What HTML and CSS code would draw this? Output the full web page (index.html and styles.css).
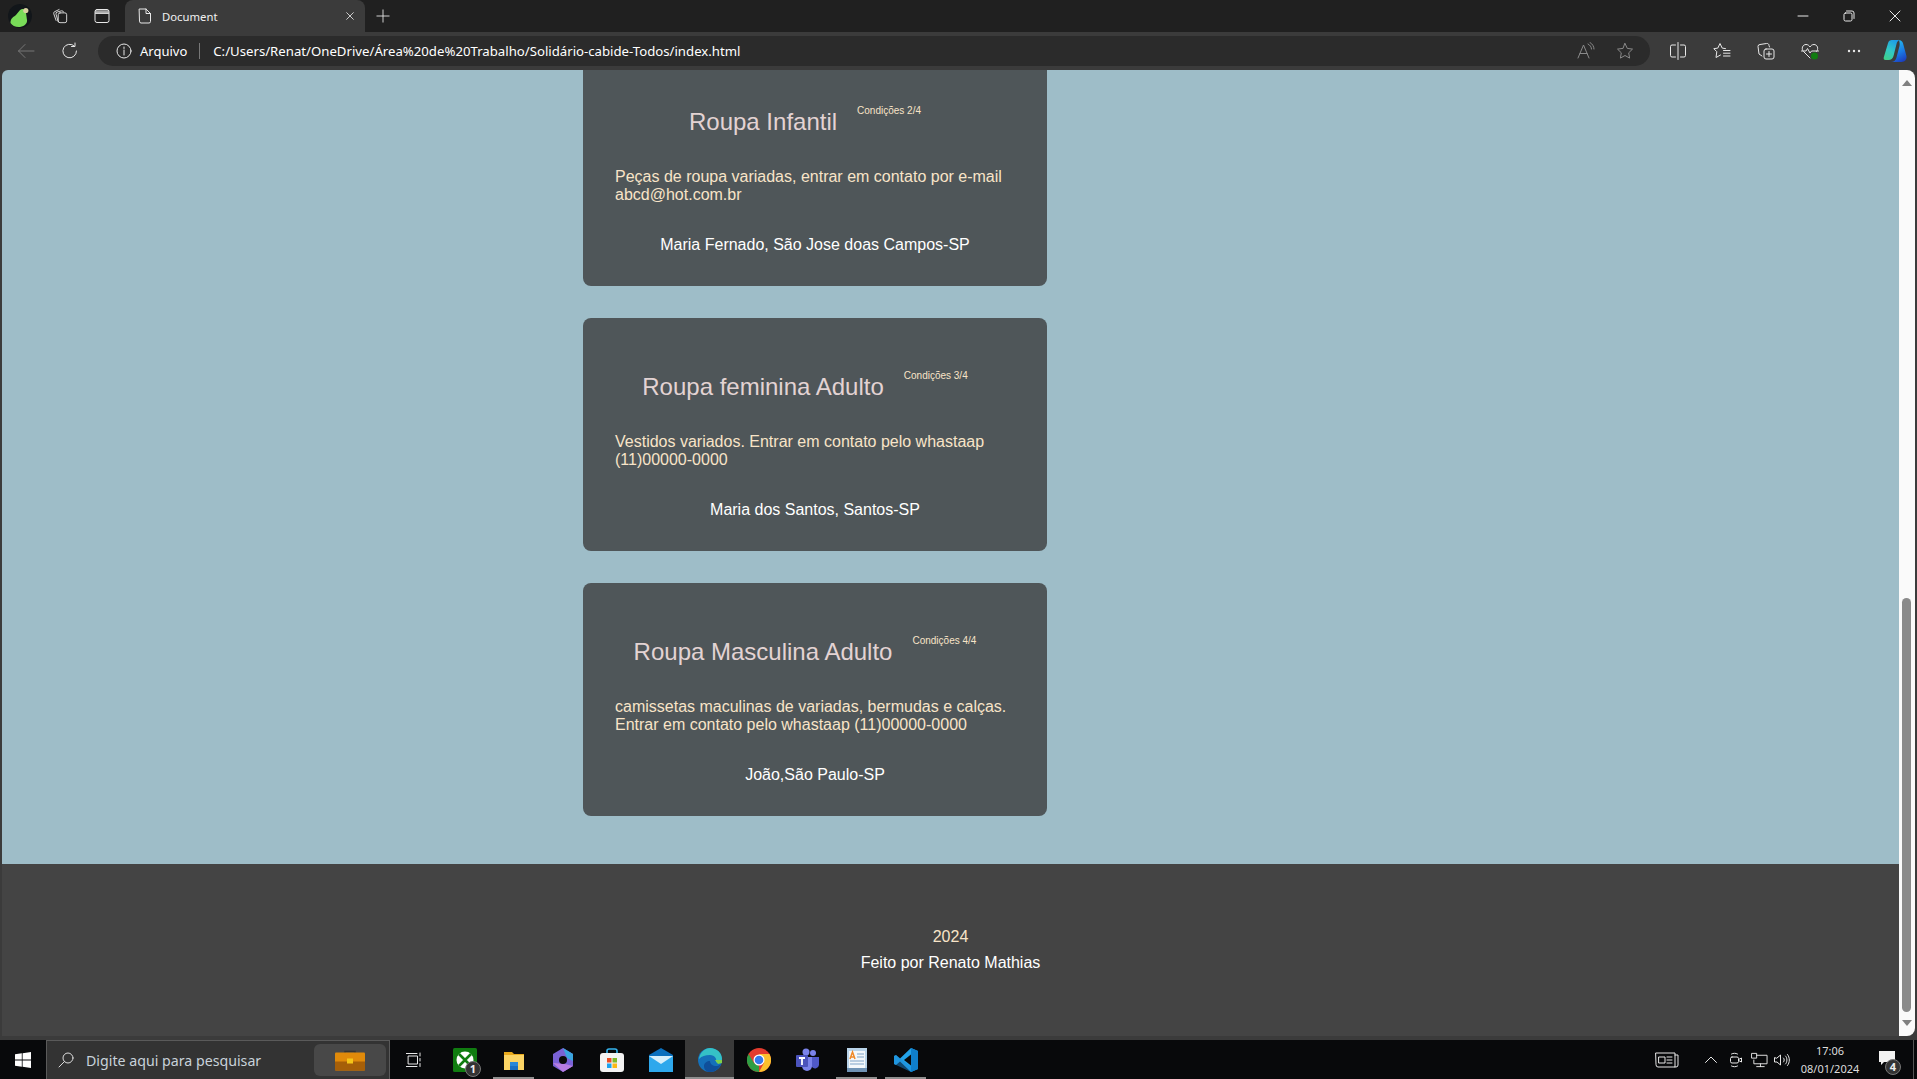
FILE: index.html
```html
<!DOCTYPE html>
<html lang="pt-BR">
<head>
<meta charset="utf-8">
<title>Document</title>
<link rel="stylesheet" href="styles.css">
</head>
<body>
<div class="tabstrip">
  <svg class="avatar" viewBox="0 0 24 24"><circle cx="12" cy="12" r="12" fill="#12161a"/><path d="M2.500 19c0-5 3-6 5.500-8 2-2 3-5 6-6 3-.5 4.500 2 4 4l1 7c.5 3-2 6-7 7-4 .5-8-1.500-9.500-4z" fill="#79dc58"/><circle cx="17.800" cy="6.500" r="2.600" fill="#d8d0a0"/></svg>
  <button class="strip-btn"><svg class="ico" viewBox="0 0 18 18"><rect x="7" y="5.500" width="9.500" height="11" rx="2"/><path d="M7 15.500 4.500 7A2 2 0 0 1 6 4.500L10.500 3.200A2 2 0 0 1 13 4.500M4.600 14 2 6.500A2 2 0 0 1 3.300 4L8 1.700"/></svg></button>
  <button class="strip-btn"><svg class="ico" viewBox="0 0 16 16"><rect x="1" y="1.500" width="14" height="13" rx="2"/><path d="M1.500 3h13M1.500 4.200h13M1.500 5.400h13"/></svg></button>
  <div class="tab">
    <svg class="ico doc" viewBox="0 0 14 16"><path d="M1.500 1h6.500l4.500 4.500v8a1.500 1.500 0 0 1-1.500 1.500H3a1.500 1.500 0 0 1-1.500-1.500zM8 1v4.500h4.500"/></svg>
    <span class="tab-title">Document</span>
    <svg class="ico tab-x" viewBox="0 0 12 12"><path d="M2 2l8 8M10 2l-8 8"/></svg>
  </div>
  <svg class="ico plus" viewBox="0 0 16 16"><path d="M8 1v14M1 8h14"/></svg>
  <div class="win-controls">
    <svg class="ico win" viewBox="0 0 12 12"><path d="M1 6h10"/></svg>
    <svg class="ico win" viewBox="0 0 12 12"><rect x="1" y="3" width="8" height="8" rx="1.500"/><path d="M3.500 1h5.500a2 2 0 0 1 2 2v5.500"/></svg>
    <svg class="ico win" viewBox="0 0 12 12"><path d="M1 1l10 10M11 1L1 11"/></svg>
  </div>
</div>
<div class="toolbar">
  <svg class="ico nav dim" viewBox="0 0 18 18"><path d="M17 9H1.500M8 2.500 1.500 9 8 15.500"/></svg>
  <svg class="ico nav" viewBox="0 0 18 18"><path d="M15.500 9a6.800 6.800 0 1 1-2.200-5M14 1v3.500h-3.500"/></svg>
  <div class="address">
    <svg class="ico info" viewBox="0 0 16 16"><circle cx="8" cy="8" r="7"/><path d="M8 7v5M8 4v1.500"/></svg>
    <span class="scheme">Arquivo</span>
    <span class="sep"></span>
    <span class="url">C:/Users/Renat/OneDrive/Área%20de%20Trabalho/Solidário-cabide-Todos/index.html</span>
    <svg class="ico addr-ico read" viewBox="0 0 18 18"><path d="M1 16 6.500 3l5.500 13M3 11.500h7M11 2c2 1 3.500 3 3.500 5M13 .5c2.500 1.500 4 4 4 6.500"/></svg>
    <svg class="ico addr-ico star" viewBox="0 0 18 18"><path d="M9 1.500l2.300 4.900 5.200.7-3.800 3.700.9 5.300L9 13.500l-4.600 2.600.9-5.300L1.500 7.100l5.200-.7z"/></svg>
  </div>
  <svg class="ico tool split" viewBox="0 0 18 18"><path d="M9 .5v17M6.500 3H3a1.500 1.500 0 0 0-1.500 1.500v9A1.500 1.500 0 0 0 3 15h3.500M11.500 3H15a1.500 1.500 0 0 1 1.500 1.500v9A1.500 1.500 0 0 1 15 15h-3.500"/></svg>
  <svg class="ico tool" viewBox="0 0 18 18"><path d="M12.500 6.600 9.200 6.100 7 1.500 4.800 6.100.8 6.700l3 3-.8 5.800 4.500-2.500M10.500 8.500H17M10.500 11.200H17M10.500 14H17"/></svg>
  <svg class="ico tool" viewBox="0 0 18 18"><rect x="7" y="7" width="10" height="10" rx="2"/><path d="M12 9.500v5M9.500 12h5M5 14 2 12 1 4.500A2 2 0 0 1 3 2.500L9.500 1.500A2 2 0 0 1 12 3.500L12.500 5"/></svg>
  <svg class="ico tool" viewBox="0 0 18 18"><path d="M9 16 2.500 9.500C0 7 1.500 2.500 5 2.500 7 2.500 8 3.500 9 5c1-1.500 2-2.500 4-2.500 3.500 0 5 4.500 2.500 7M.5 9H5l1.500-2.500L9 11l1.500-2h7"/><circle class="green-dot" cx="13.500" cy="14" r="3.500"/></svg>
  <svg class="tool dots" viewBox="0 0 14 4"><circle cx="2" cy="2" r="1.200"/><circle cx="7" cy="2" r="1.200"/><circle cx="12" cy="2" r="1.200"/></svg>
  <svg class="copilot" viewBox="0 0 24 24">
    <defs>
      <linearGradient id="cpA" x1="0.700" y1="0" x2="0.200" y2="1"><stop offset="0" stop-color="#1d9be8"/><stop offset="0.550" stop-color="#32c9c4"/><stop offset="1" stop-color="#3fd08a"/></linearGradient>
      <linearGradient id="cpB" x1="0.300" y1="0" x2="0.700" y2="1"><stop offset="0" stop-color="#28c4ee"/><stop offset="0.600" stop-color="#1a78e4"/><stop offset="1" stop-color="#1c3fc0"/></linearGradient>
    </defs>
    <path d="M9 1h7.500c-1.500.5-2.500 2-3 4l-3 12c-.7 2.500-2.500 4-5 4H2.500C1 21 .3 19.800.8 18.300L5 4.200C5.600 2.200 7 1 9 1z" fill="url(#cpA)"/>
    <path d="M15.500 1c2.500 0 4 1.300 4.500 3.300l3.500 13c.4 3-1.500 5.700-5 5.700H8c2.700 0 4.700-1.500 5.500-4.500l3-11.500c.5-2.500 0-5-1-6.500z" fill="url(#cpB)"/>
  </svg>
</div>
<div class="viewport">
  <main class="page">
    <section class="cards">
      <article class="card">
        <header class="card-head"><h2 class="card-title">Roupa Infantil</h2><small class="card-cond">Condições 2/4</small></header>
        <p class="card-desc">Peças de roupa variadas, entrar em contato por e-mail abcd@hot.com.br</p>
        <p class="card-author">Maria Fernado, São Jose doas Campos-SP</p>
      </article>
      <article class="card">
        <header class="card-head"><h2 class="card-title">Roupa feminina Adulto</h2><small class="card-cond">Condições 3/4</small></header>
        <p class="card-desc">Vestidos variados. Entrar em contato pelo whastaap (11)00000-0000</p>
        <p class="card-author">Maria dos Santos, Santos-SP</p>
      </article>
      <article class="card">
        <header class="card-head"><h2 class="card-title">Roupa Masculina Adulto</h2><small class="card-cond">Condições 4/4</small></header>
        <p class="card-desc">camissetas maculinas de variadas, bermudas e calças. Entrar em contato pelo whastaap (11)00000-0000</p>
        <p class="card-author">João,São Paulo-SP</p>
      </article>
    </section>
    <footer class="site-footer">
      <p class="foot-year">2024</p>
      <p class="foot-by">Feito por Renato Mathias</p>
    </footer>
  </main>
  <aside class="scrollbar">
    <svg class="arrow" viewBox="0 0 10 6"><path d="M5 0l5 6H0z"/></svg>
    <div class="track"><div class="thumb"></div></div>
    <svg class="arrow" viewBox="0 0 10 6"><path d="M5 6l5-6H0z"/></svg>
  </aside>
</div>
<div class="taskbar">
  <button class="start"><svg class="task-svg" viewBox="0 0 16 16"><path class="white" d="M0 2.300 6.800 1.300v6.300H0zM7.600 1.200 16 0v7.600H7.600zM0 8.400h6.800v6.300L0 13.700zM7.600 8.400H16V16l-8.400-1.200z"/></svg></button>
  <div class="search">
    <svg class="ico search-ico" viewBox="0 0 16 16"><circle cx="10" cy="6" r="5"/><path d="M6.500 9.500 1 15"/></svg>
    <span class="search-text">Digite aqui para pesquisar</span>
    <div class="widget"><svg class="case" viewBox="0 0 30 20"><path d="M10 3V1h10v2" fill="none" stroke="#333" stroke-width="1.500"/><rect y="2" width="30" height="18" rx="1" fill="#e08a0a"/><rect y="11" width="30" height="9" fill="#a65f08"/><rect x="12" y="8" width="6" height="5" fill="#f5c518"/></svg></div>
  </div>
  <button class="task-btn view"><svg class="ico task-svg" viewBox="0 0 16 16"><rect x="2.500" y="4" width="9" height="8"/><path d="M0 1.500h11M0 14.500h11M14 1v3M14 6.500v2.500M14 11.500v3"/></svg></button>
  <button class="task-btn"><svg class="task-svg big" viewBox="0 0 24 24"><rect width="24" height="24" rx="1.500" fill="#107c10"/><circle cx="12" cy="12" r="8.500" fill="#fff"/><path d="M6 6l12 12M18 6 6 18" stroke="#107c10" stroke-width="2.600"/></svg><span class="badge badge-x">1</span></button>
  <button class="task-btn on"><svg class="task-svg big" viewBox="0 0 24 24"><path d="M2 4h8l2 2h10v16H2z" fill="#e8a91c"/><path d="M2 7h20v15H2z" fill="#fbd465"/><path d="M8 18v-4h8v4" fill="#2a88d8"/><path d="M8 22v-4h8v4" fill="#1b6fc2"/></svg></button>
  <button class="task-btn"><svg class="task-svg big" viewBox="0 0 24 24"><path d="M12 0 22 6v12l-10 6-10-6V6z" fill="#7a62d6"/><path d="M12 0l10 6v7l-6-3z" fill="#3aa5e0"/><path d="M2 15l10 9 10-6-8-2z" fill="#b77ce0"/><circle cx="12" cy="12" r="4" fill="#0a0a0a"/></svg></button>
  <button class="task-btn"><svg class="task-svg big" viewBox="0 0 24 24"><path d="M7 6V3a2 2 0 0 1 2-2h6a2 2 0 0 1 2 2v3" fill="none" stroke="#35b4ee" stroke-width="1.600"/><rect y="5" width="24" height="19" rx="3" fill="#f3f3f3"/><rect x="7" y="10" width="4.500" height="4.500" fill="#ea4e25"/><rect x="12.500" y="10" width="4.500" height="4.500" fill="#7eba28"/><rect x="7" y="15.500" width="4.500" height="4.500" fill="#1aa3f0"/><rect x="12.500" y="15.500" width="4.500" height="4.500" fill="#fcb813"/></svg></button>
  <button class="task-btn"><svg class="task-svg big" viewBox="0 0 24 24"><path d="M0 7 12 0l12 7v15H0z" fill="#0a6fbd"/><path d="M0 8h24v16H0z" fill="#2ea8ec"/><path d="M0 8l12 8 12-8z" fill="#d6effb"/></svg></button>
  <button class="task-btn on active"><svg class="task-svg big" viewBox="0 0 24 24"><circle cx="12" cy="12" r="12" fill="#1570b9"/><path d="M1 11C2 4 7 0 12 0c7 0 12 5 12 11 0 4-4 5-6 3 1-3-1-7-6-7-5 0-8 1-11 4z" fill="#35c1c6"/><path d="M24 13c-1 6-6 11-12 11-3 0-6-2-6-6 0-3 3-5 6-5 0 3 3 5 6 5 3 0 6-2 6-5z" fill="#0f4f9a"/><path d="M17 12h7v3l-4 1z" fill="#7fd14b"/></svg></button>
  <button class="task-btn"><svg class="task-svg big" viewBox="0 0 24 24"><circle cx="12" cy="12" r="12" fill="#e33b2e"/><path d="M12 24A12 12 0 0 1 1.600 6L7 15l5 3z" fill="#2f9e44"/><path d="M12 6h10.400A12 12 0 0 1 12 24l5-9z" fill="#fbc02d"/><circle cx="12" cy="12" r="5.500" fill="#fff"/><circle cx="12" cy="12" r="4.300" fill="#3579ea"/></svg></button>
  <button class="task-btn"><svg class="task-svg big" viewBox="0 0 24 24"><circle cx="17" cy="5" r="3" fill="#7b83eb"/><circle cx="10" cy="4" r="3.500" fill="#7b83eb"/><path d="M13 9h10v8a4 4 0 0 1-7 2l-3-2z" fill="#5059c9"/><path d="M6 9h10v9a5 5 0 0 1-10 0z" fill="#7b83eb"/><rect y="7" width="12" height="12" rx="1" fill="#4b53bc"/><path d="M3 10h6M6 10v7" stroke="#fff" stroke-width="1.800"/></svg></button>
  <button class="task-btn on"><svg class="task-svg big" viewBox="0 0 24 24"><path d="M2 0h20v22H2z" fill="#b9d4ea"/><rect x="4" y="3" width="16" height="17" fill="#f4f8fb"/><path d="M12 6h7M12 9h7M5 13h14M5 16h14" stroke="#7fa3c7"/><path d="M5 11 7.500 4 10 11M6 9h3" stroke="#f08a2a" fill="none" stroke-width="1.500"/><rect x="2" y="20" width="20" height="4" fill="#6f93b5"/></svg></button>
  <button class="task-btn on"><svg class="task-svg big" viewBox="0 0 24 24"><path d="M17 0 24 3v18l-7 3L6 13.500 2 17l-2-1V8l2-1 4 3.500z" fill="#23a3ea"/><path d="M17 6.500 10 12l7 5.500z" fill="#0a0a0a"/><path d="M17 0 24 3v18l-7 3z" fill="#0f7fcc"/><path d="M0 8l2-1 15 12v5L0 16z" fill="#1c8ad6" opacity=".5"/></svg></button>
  <div class="tray">
    <svg class="ico tray-news" viewBox="0 0 24 16"><path d="M1 1h19v14H3a2 2 0 0 1-2-2zM20 3h3v10a2 2 0 0 1-2 2h-1M4 5h6v6H4zM12 5h5M12 8h5M12 11h5"/></svg>
    <svg class="ico tray-chev" viewBox="0 0 12 7"><path d="M.5 6.500 6 1l5.500 5.500"/></svg>
    <svg class="ico tray-ico tray-meet" viewBox="0 0 16 16"><rect x="2" y="5" width="8" height="6" rx="1.500"/><path d="M10 7.500l3-1.500v4l-3-1.500M3 2c2-1 4-1 6 0M3 14c2 1 4 1 6 0"/></svg>
    <svg class="ico tray-ico" viewBox="0 0 18 16"><path d="M6 3h11v9H3V8M10 12v3M6 15h8M1 1h5v5H1z"/></svg>
    <svg class="ico tray-ico" viewBox="0 0 16 16"><path d="M1 6v4h2.500L7 13V3L3.500 6zM10 6c1 1 1 3 0 4M12 4c2 2 2 6 0 8M14 2.500c2.500 3 2.500 8 0 11"/></svg>
    <div class="clock"><span>17:06</span><span>08/01/2024</span></div>
    <div class="notify"><svg class="notify-ico" viewBox="0 0 16 14"><path d="M0 0h16v11H5l-3 3v-3H0z"/></svg><span class="badge badge-n">4</span></div>
    <span class="show-desktop"></span>
  </div>
</div>
</body>
</html>
```

FILE: styles.css
```css
* { box-sizing: border-box; }
html, body { height: 100%; }
body {
  margin: 0;
  height: 100vh;
  display: flex;
  flex-direction: column;
  overflow: hidden;
  background: #3b3b3b;
  font-family: "Noto Sans", "Open Sans", sans-serif;
  color: #fff;
}
button { background: none; border: 0; padding: 0; color: inherit; }
.ico { fill: none; stroke: #e8e8e8; stroke-width: 1; stroke-linecap: round; stroke-linejoin: round; flex: none; }

/* tab strip */
.tabstrip { height: 32px; flex: none; display: flex; align-items: center; background: #202020; padding-left: 8px; }
.avatar { width: 24px; height: 24px; flex: none; }
.strip-btn { width: 42px; height: 32px; display: flex; align-items: center; justify-content: center; }
.avatar + .strip-btn { margin-left: 7px; }
.strip-btn .ico { width: 16px; height: 16px; }
.tab { width: 240px; height: 32px; margin-left: 2px; background: #3b3b3b; border-radius: 8px 8px 0 0; display: flex; align-items: center; padding: 0 10px 0 13px; }
.doc { width: 14px; height: 16px; }
.tab-title { font-size: 11.3px; margin-left: 10px; flex: 1; color: #f0f0f0; }
.tab-x { width: 10px; height: 10px; }
.plus { width: 14px; height: 14px; margin-left: 11px; }
.win-controls { margin-left: auto; display: flex; gap: 34px; padding-right: 16px; }
.win { width: 12px; height: 12px; }

/* toolbar */
.toolbar { height: 38px; flex: none; display: flex; align-items: center; background: #3b3b3b; padding-left: 17px; }
.nav { width: 18px; height: 18px; margin-right: 26px; }
.dim { stroke: #777; }
.address { width: 1552px; height: 30px; margin-left: -7px; background: #2b2b2b; border-radius: 15px; display: flex; align-items: center; padding-left: 18px; }
.info { width: 16px; height: 16px; }
.scheme { font-size: 13px; margin-left: 8px; }
.sep { width: 1px; height: 16px; background: #777; margin: 0 13px 0 12px; }
.url { font-size: 13.2px; flex: 1; white-space: nowrap; }
.addr-ico { width: 18px; height: 18px; stroke: #8a8a8a; margin-right: 21px; }
.star { margin-right: 16px; }
.tool { width: 18px; height: 18px; margin-left: 26px; }
.split { margin-left: 19px; }
.green-dot { fill: #107c10; stroke: none; }
.dots { width: 14px; height: 4px; fill: #e8e8e8; margin-left: 28px; }
.copilot { width: 24px; height: 24px; margin-left: 22px; flex: none; }

/* page */
.viewport { flex: 1; min-height: 0; display: flex; padding: 0 2px 4px; }
.page { flex: 1; min-width: 0; display: flex; flex-direction: column; justify-content: flex-end; overflow: hidden; background: #9ebdc8; border-radius: 6px 0 0 0; font-family: "Liberation Sans", Arial, sans-serif; }
.cards { flex: none; width: 464px; margin: 0 0 48px 581px; display: flex; flex-direction: column; gap: 32px; }
.card { flex: none; height: 233px; padding: 32px; background: #4f5659; border-radius: 8px; }
.card-head { display: flex; justify-content: center; align-items: flex-start; }
.card-title { margin: 23px 0 0; font-size: 24px; font-weight: 400; color: #e3d3d3; }
.card-cond { margin: 20px 20px 0; font-size: 10px; color: #f8e4c8; }
.card-desc { margin: 32px 0 0; font-size: 16px; color: #f8e4c8; }
.card-author { margin: 32px 0 0; font-size: 16px; color: #fff; text-align: center; }
.site-footer { flex: none; height: 172px; background: #444; text-align: center; padding-top: 64px; font-size: 16px; }
.foot-year { margin: 0 0 8px; color: #f8e4c8; }
.foot-by { margin: 0; color: #fff; }

/* scrollbar */
.scrollbar { width: 16px; flex: none; background: #fafafa; border-radius: 0 8px 8px 0; display: flex; flex-direction: column; align-items: center; padding: 10px 0; }
.arrow { width: 10px; height: 6px; fill: #808080; flex: none; }
.track { flex: 1; width: 100%; display: flex; flex-direction: column; justify-content: flex-end; padding: 0 4px 8px 3px; }
.thumb { height: 414px; background: #8a8a8a; border-radius: 5px; }

/* taskbar */
.taskbar { height: 39px; flex: none; display: flex; align-items: stretch; background: #08090b; }
.start { width: 46px; display: flex; align-items: center; justify-content: center; }
.task-svg { width: 16px; height: 16px; }
.white { fill: #fff; }
.big { width: 24px; height: 24px; }
.search { width: 344px; display: flex; align-items: center; background: #333; border: 1px solid #5a5a5a; border-bottom: 0; padding-left: 11px; }
.search-ico { width: 16px; height: 16px; stroke: #ddd; }
.search-text { font-size: 14.2px; color: #c8d2da; margin-left: 12px; flex: 1; }
.widget { width: 72px; height: 32px; background: #484848; border-radius: 6px; margin-right: 3px; display: flex; align-items: center; justify-content: center; }
.case { width: 30px; height: 21px; }
.task-btn { width: 49px; flex: none; display: flex; align-items: center; justify-content: center; position: relative; }
.view { width: 48px; margin-right: 2px; }
.on::after { content: ""; position: absolute; left: 4px; right: 4px; bottom: 0; height: 2px; background: #8f8f8f; }
.active { background: #3a3a3a; }
.active::after { left: 0; right: 0; }
.badge { position: absolute; width: 16px; height: 16px; border-radius: 50%; background: #333; border: 1px solid #777; font: 700 11px/14px "Noto Sans", sans-serif; color: #eee; text-align: center; }
.badge-x { left: 25px; top: 21px; }
.tray { margin-left: auto; display: flex; align-items: center; }
.tray-news { width: 24px; height: 16px; margin-right: 26px; }
.tray-chev { width: 12px; height: 7px; margin-right: 11px; }
.tray-ico { width: 17px; height: 16px; margin-right: 5px; }
.tray-meet { margin-right: 6px; }
.clock { width: 66px; margin: 0 10px 0 2px; display: flex; flex-direction: column; align-items: center; font-size: 11px; line-height: 18px; color: #ddd; }
.notify { width: 30px; height: 39px; position: relative; display: flex; align-items: center; justify-content: center; margin-right: 10px; }
.notify-ico { width: 16px; height: 14px; fill: #f2f2f2; margin: -3px 0 0 -2px; }
.badge-n { left: 12px; top: 19px; }
.show-desktop { width: 1px; height: 39px; background: #555; margin-right: 3px; }
```
